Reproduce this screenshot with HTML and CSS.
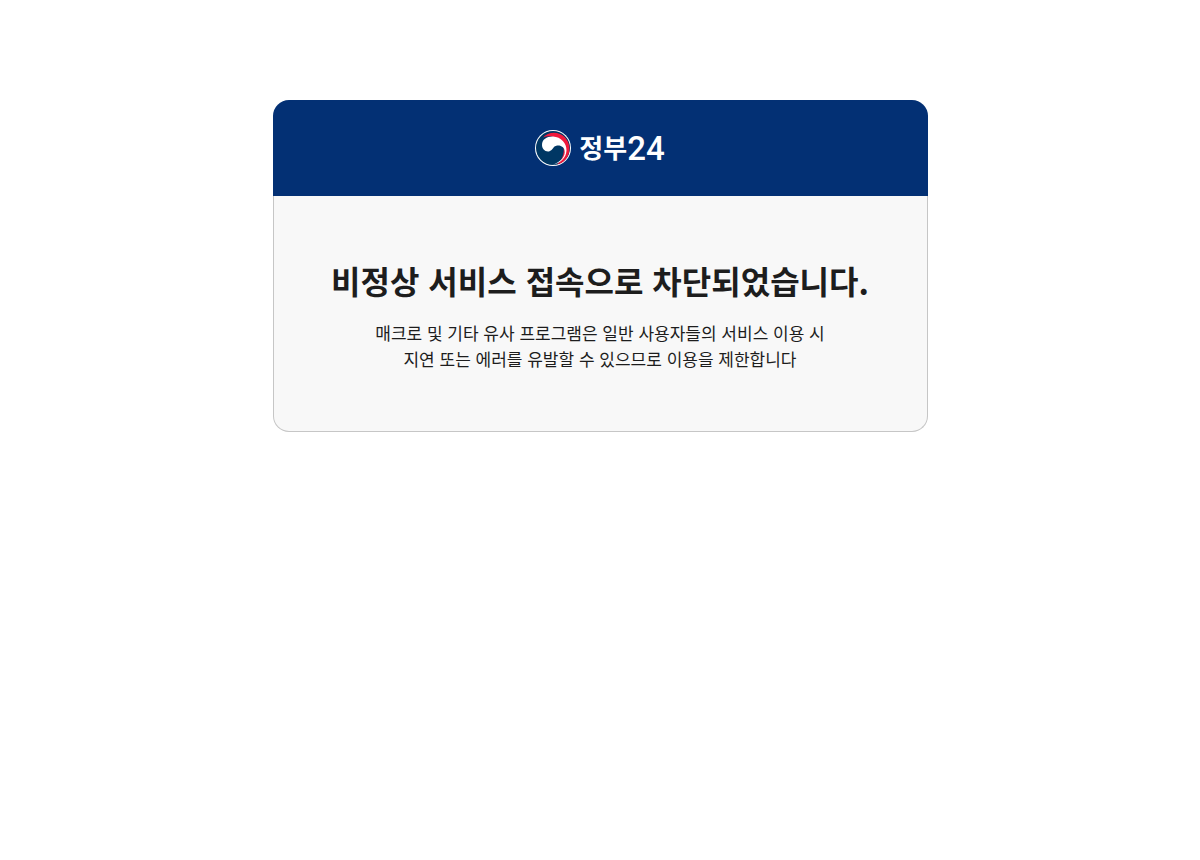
FILE: index.html
```html
<!DOCTYPE html>
<html lang="ko">
<head>
  <meta charset="UTF-8">
  <meta name="viewport" content="width=device-width, initial-scale=1">
  <title>정부24</title>
  <link rel="stylesheet" href="styles.css">
</head>
<body>
  <main class="error-box">
    <div class="error-header">
      <svg class="logo-mark" viewBox="0 0 36 36" aria-hidden="true">
        <circle cx="18" cy="18" r="18" fill="#fff"/>
        <circle cx="18" cy="18" r="17" fill="#003764"/>
        <path d="M8 7.5C12 3 19 1.6 25 4C32 7 36 15 34 22.5C32.5 28.5 29 32.5 22 34.5C28 30 31 20 27 12C20 6 14 5 8 7.5Z" fill="#f0193c"/>
        <path d="M7 15C7 9 12 6.2 18 6.4C26 6.8 31.8 13 31.5 20.5C31 28 26 33 17 35C26 32 31 26 29.5 20C28.5 15.5 22 14 19 17C17.5 19 16 21.5 13 21.5C9.5 21.5 7 18.5 7 15Z" fill="#fff"/>
      </svg>
      <span class="logo-text">정부<span class="logo-num">24</span></span>
    </div>
    <div class="error-body">
      <h1>비정상 서비스 접속으로 차단되었습니다.</h1>
      <p>매크로 및 기타 유사 프로그램은 일반 사용자들의 서비스 이용 시<br>지연 또는 에러를 유발할 수 있으므로 이용을 제한합니다</p>
    </div>
  </main>
</body>
</html>
```
FILE: styles.css
```css
* {
  box-sizing: border-box;
}

body {
  margin: 0;
  padding: 100px 20px;
  background: #fff;
  color: #1d1d1d;
  font-family: "Noto Sans CJK KR", sans-serif;
}

.error-box {
  max-width: 655px;
  margin: 0 auto;
  text-align: center;
}

.error-header {
  display: flex;
  align-items: center;
  justify-content: center;
  gap: 8px;
  height: 96px;
  border-radius: 16px 16px 0 0;
  background: #033074;
  color: #fff;
}

.logo-mark {
  width: 36px;
  height: 36px;
}

.logo-text {
  display: flex;
  align-items: center;
  padding-bottom: 2px;
  font-size: 26px;
  font-weight: 700;
  line-height: 36px;
}

.logo-num {
  padding-top: 4px;
  font-family: Roboto, sans-serif;
  font-size: 33px;
  font-weight: 500;
}

.error-body {
  padding: 60px 20px 59px;
  border: 1px solid #c6c6c6;
  border-top: 0;
  border-radius: 0 0 16px 16px;
  background: #f8f8f8;
}

h1 {
  margin: 0 0 16px;
  font-size: 32px;
  font-weight: 700;
  line-height: 48px;
}

p {
  margin: 0;
  font-size: 17px;
  line-height: 26px;
}
```
